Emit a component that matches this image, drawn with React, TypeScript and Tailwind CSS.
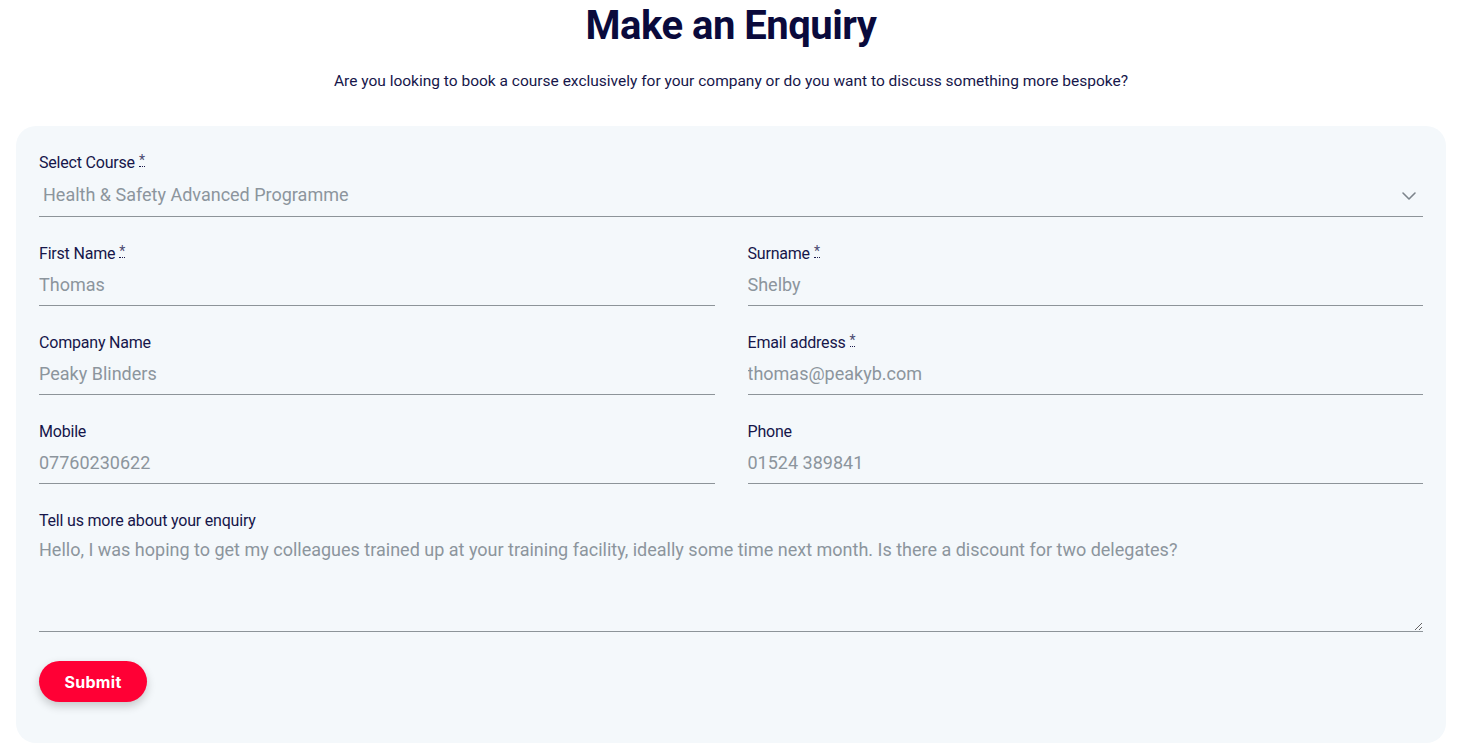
import { ChevronDown } from 'lucide-react'

function Req() {
  return (
    <abbr
      title="required"
      className="relative top-[-3px] ml-1 inline-block border-b border-dotted border-[#1b1b4b] text-[14px] leading-[11px] text-[#4a4a70] no-underline"
    >
      *
    </abbr>
  )
}

function Field({
  label,
  required,
  placeholder,
}: {
  label: string
  required?: boolean
  placeholder: string
}) {
  return (
    <label className="flex flex-col">
      <span className="h-[21px] text-[16px] leading-[21px] tracking-[-0.2px] text-[#16164a]">
        {label}
        {required && <Req />}
      </span>
      <input
        placeholder={placeholder}
        className="h-[42px] border-b border-[#8d9499] bg-transparent text-[18px] text-[#16164a] outline-none placeholder:text-[#8c959d]"
      />
    </label>
  )
}

export default function App() {
  return (
    <div
      className="min-h-screen bg-white px-4 pt-2"
      style={{ fontFamily: 'Roboto, "Liberation Sans", sans-serif' }}
    >
      <h1 className="text-center text-[40px] font-bold leading-[36px] tracking-[-0.5px] text-[#0a0a3c]">
        Make an Enquiry
      </h1>
      <p className="mt-[25px] text-center text-[15.5px] leading-[24px] text-[#16164a]">
        Are you looking to book a course exclusively for your company or do you want to discuss something more bespoke?
      </p>

      <form className="mt-[33px] rounded-[20px] bg-[#f4f8fb] px-[23px] pt-[26px] pb-[41px]">
        <label className="flex flex-col">
          <span className="h-[21px] text-[16px] leading-[21px] tracking-[-0.2px] text-[#16164a]">
            Select Course
            <Req />
          </span>
          <div className="relative flex h-[44px] items-center border-b border-[#8d9499]">
            <span className="pl-1 text-[18px] text-[#8c959d]">Health &amp; Safety Advanced Programme</span>
            <ChevronDown className="absolute right-[2px] top-[11px] h-6 w-6 text-[#7c848b]" strokeWidth={1.6} />
          </div>
        </label>

        <div className="mt-[26px] grid grid-cols-2 gap-x-[33px] gap-y-[26px]">
          <Field label="First Name" required placeholder="Thomas" />
          <Field label="Surname" required placeholder="Shelby" />
          <Field label="Company Name" placeholder="Peaky Blinders" />
          <Field label="Email address" required placeholder="thomas@peakyb.com" />
          <Field label="Mobile" placeholder="07760230622" />
          <Field label="Phone" placeholder="01524 389841" />
        </div>

        <label className="mt-[26px] flex flex-col">
          <span className="h-[21px] text-[16px] leading-[21px] tracking-[-0.2px] text-[#16164a]">
            Tell us more about your enquiry
          </span>
          <textarea
            placeholder="Hello, I was hoping to get my colleagues trained up at your training facility, ideally some time next month. Is there a discount for two delegates?"
            className="h-[101px] resize-y border-b border-[#8d9499] bg-transparent pt-[7px] text-[18px] leading-[24px] text-[#16164a] outline-none placeholder:text-[#8c959d]"
          />
        </label>

        <button
          type="button"
          className="mt-[29px] h-[41px] w-[108px] rounded-full bg-[#ff0035] text-[16px] font-bold tracking-[0.3px] text-white shadow-[0_4px_10px_rgba(0,0,0,0.2)]"
          style={{ fontFamily: 'Inter, "Open Sans", sans-serif' }}
        >
          Submit
        </button>
      </form>
    </div>
  )
}
